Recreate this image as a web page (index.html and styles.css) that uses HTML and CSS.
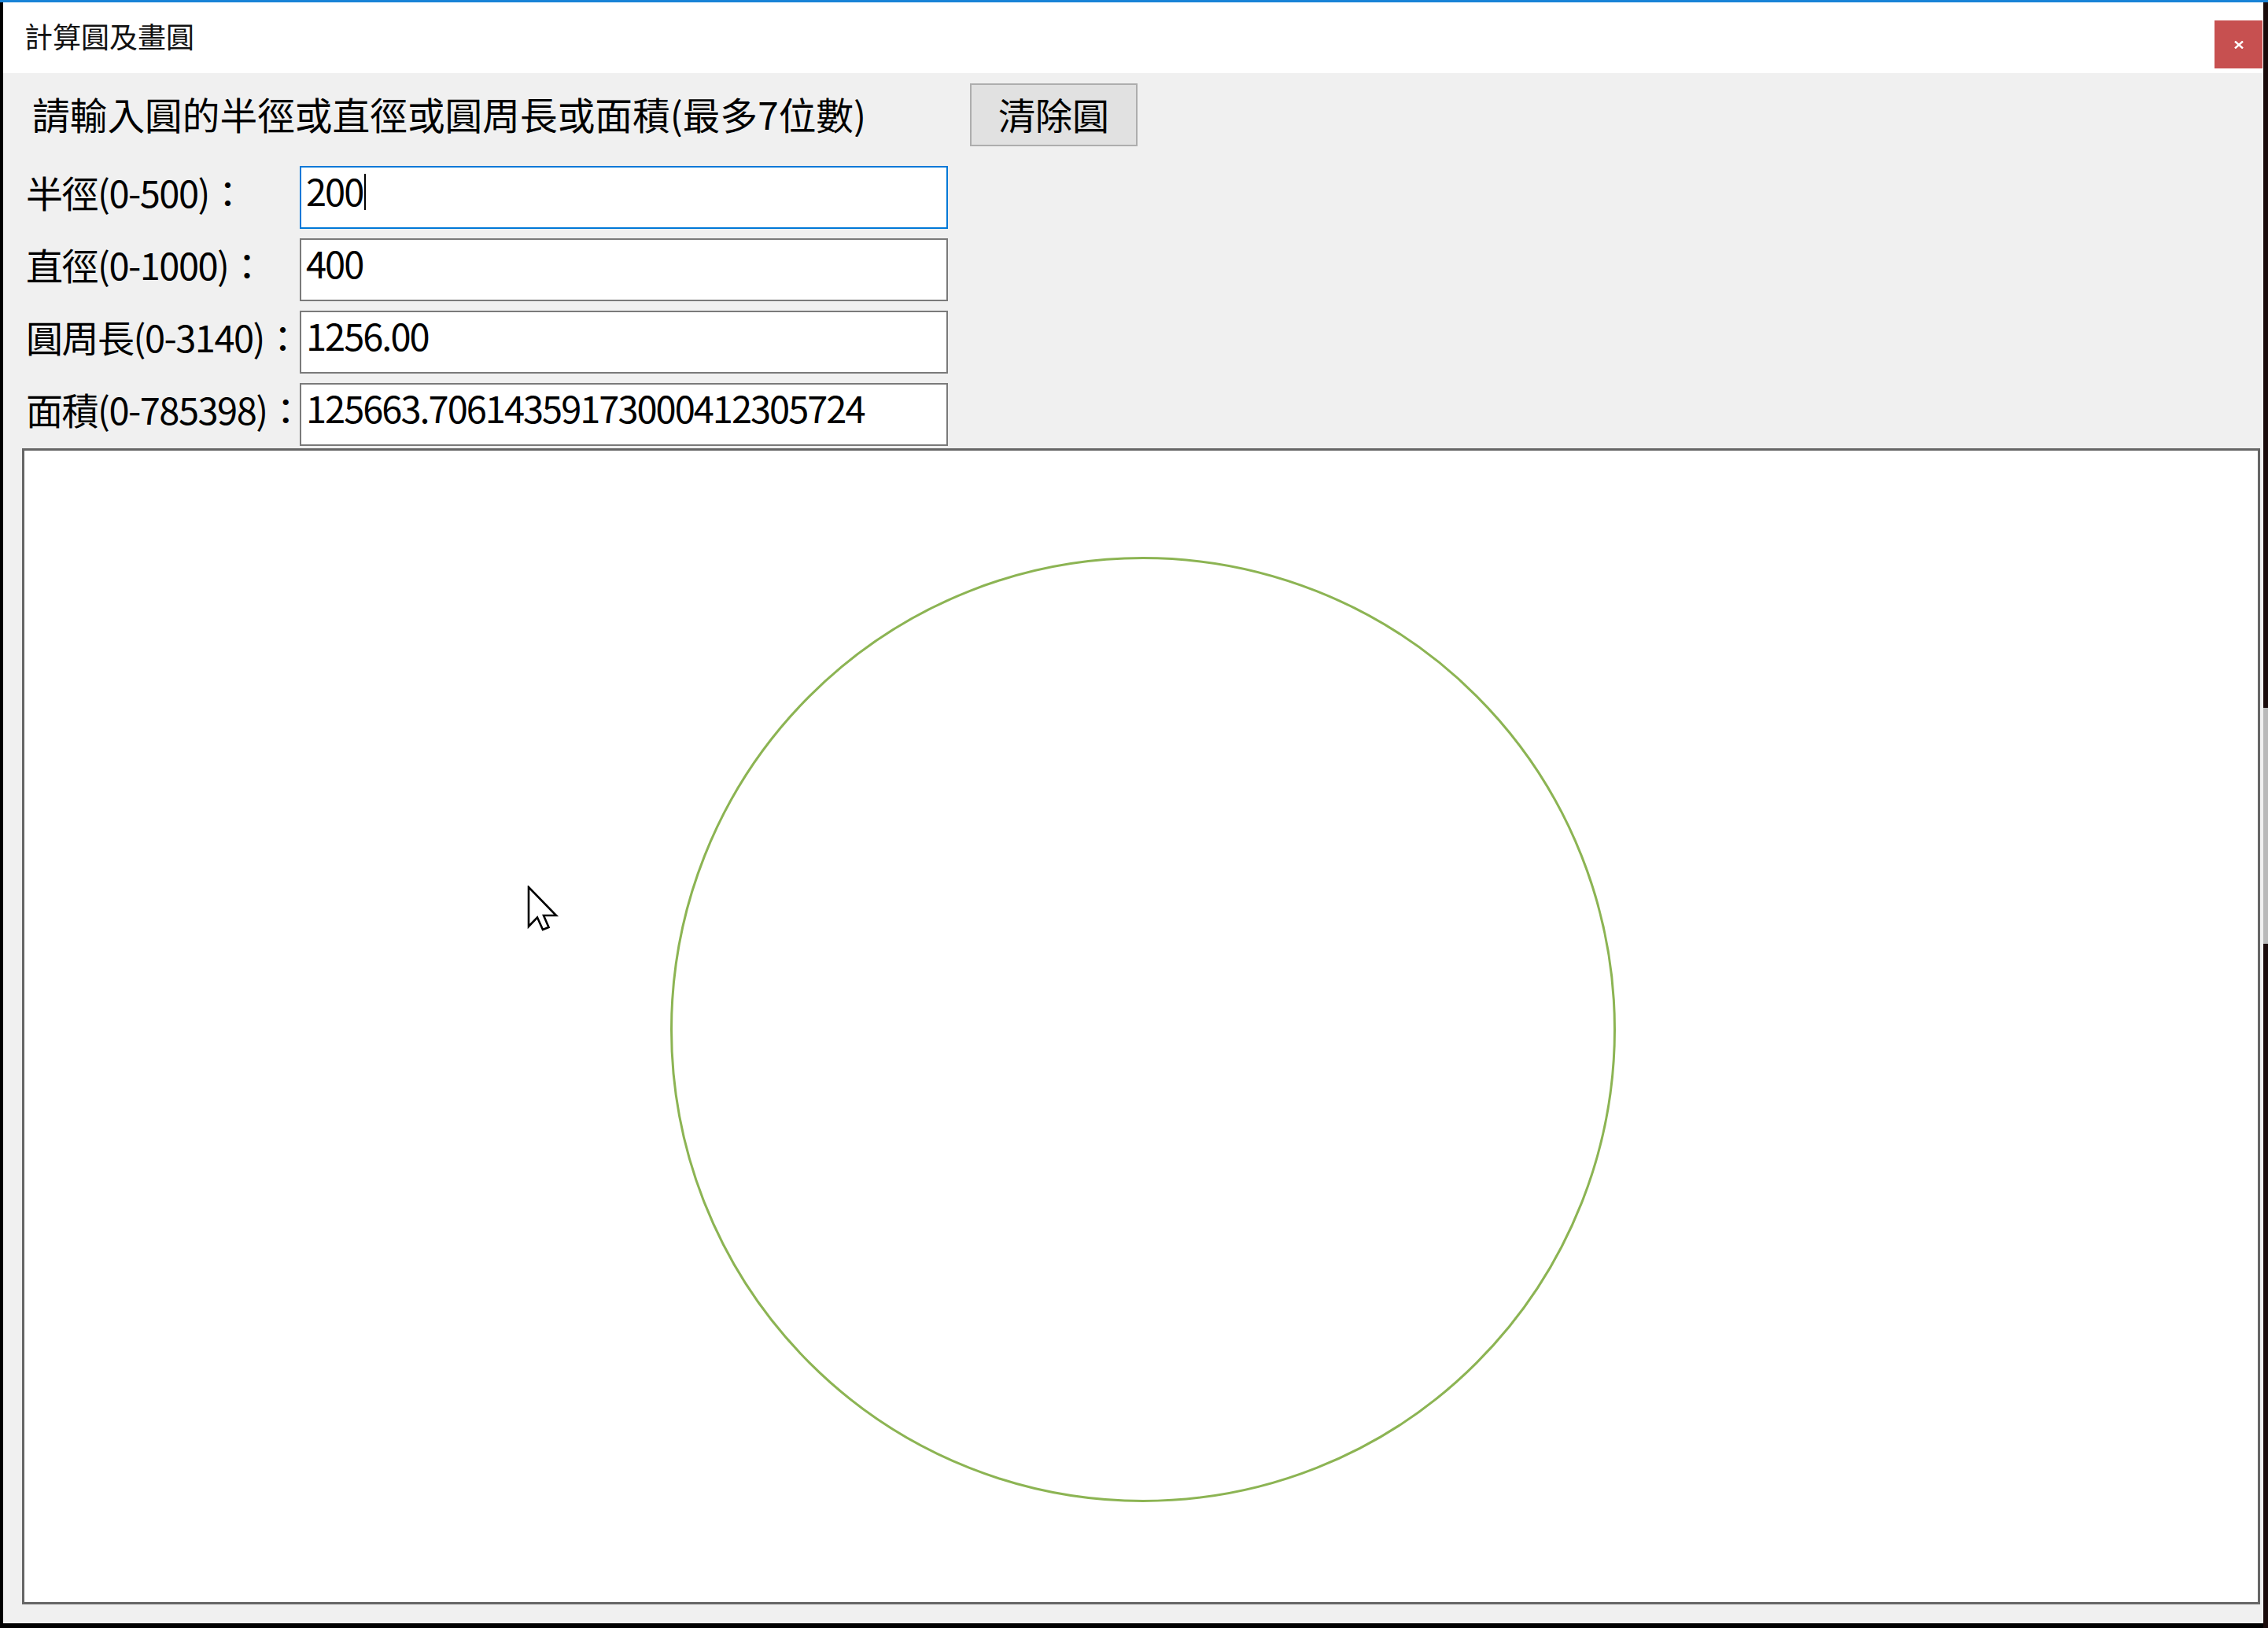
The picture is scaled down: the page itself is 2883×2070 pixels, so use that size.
FILE: index.html
```html
<!DOCTYPE html>
<html lang="zh-Hant">
<head>
<meta charset="utf-8">
<title>計算圓及畫圓</title>
<link rel="stylesheet" href="styles.css">
</head>
<body>
<div class="screen">
  <div class="gutter-left"></div>
  <div class="window">
    <div class="titlebar">
      <div class="title">計算圓及畫圓</div>
      <div class="close">
        <svg class="close-x" viewBox="0 0 12 10" width="12" height="10"><path d="M1 0.5 L11 9.5 M11 0.5 L1 9.5" stroke="#fff" stroke-width="2.4"/></svg>
      </div>
    </div>
    <div class="client">
      <div class="prompt-row">
        <div class="prompt">請輸入圓的半徑或直徑或圓周長或面積(最多7位數)</div>
        <div class="button">清除圓</div>
      </div>
      <div class="fields">
        <div class="label">半徑(0-500)：</div>
        <div class="textbox focused"><span class="value">200</span><span class="caret"></span></div>
        <div class="label">直徑(0-1000)：</div>
        <div class="textbox"><span class="value">400</span></div>
        <div class="label">圓周長(0-3140)：</div>
        <div class="textbox"><span class="value">1256.00</span></div>
        <div class="label">面積(0-785398)：</div>
        <div class="textbox"><span class="value">125663.70614359173000412305724</span></div>
      </div>
      <div class="canvas">
        <svg class="drawing" viewBox="0 0 2839 1464" width="2839" height="1464">
          <circle cx="1422" cy="736" r="599.5" fill="none" stroke="#8cb453" stroke-width="3"/>
        </svg>
        <svg class="cursor" viewBox="-2 -2 42 60" width="42" height="60">
          <path d="M0 0 L0 50 L11 38.5 L18 54 L25.5 51 L19 36 L35 36 Z" fill="#fff" stroke="#000" stroke-width="2.6" stroke-linejoin="miter"/>
        </svg>
      </div>
    </div>
  </div>
  <div class="gutter-right"><div class="desk-grey"></div></div>
</div>
</body>
</html>
```

FILE: styles.css
```css
html, body {
  margin: 0;
  padding: 0;
  background: #000;
}
body {
  width: 2883px;
  height: 2070px;
  overflow: hidden;
  font-family: "Noto Sans CJK TC", "Noto Sans", sans-serif;
  color: #000;
}
.screen {
  display: flex;
  width: 2883px;
  height: 2070px;
}
.gutter-left {
  width: 4px;
  flex: none;
  background: linear-gradient(#1883d7 0 3px, #000 3px);
}
.gutter-right {
  width: 6px;
  flex: none;
  background: linear-gradient(#1883d7 0 3px, #1a0b0b 3px);
  display: flex;
  flex-direction: column;
}
.desk-grey {
  margin-top: 900px;
  height: 300px;
  background: #b9b9b9;
}
.window {
  width: 2873px;
  height: 2064px;
  flex: none;
  display: flex;
  flex-direction: column;
  border-top: 3px solid #1883d7;
  box-sizing: border-box;
  background: #f0f0f0;
}
.titlebar {
  height: 90px;
  flex: none;
  background: #fff;
  display: flex;
  align-items: flex-start;
  justify-content: space-between;
}
.title {
  margin-top: 19px;
  padding-left: 27px;
  font-size: 36px;
  line-height: 46px;
  color: #111;
}
.close {
  margin-top: 23px;
  margin-right: 1px;
  width: 61px;
  height: 61px;
  background: #c75050;
  display: flex;
  align-items: center;
  justify-content: center;
}
.close-x {
  display: block;
}
.client {
  flex: 1;
  display: flex;
  flex-direction: column;
  background: #f0f0f0;
}
.prompt-row {
  display: flex;
  align-items: center;
  padding-top: 13px;
  height: 80px;
}
.prompt {
  width: 1229px;
  padding-left: 37px;
  box-sizing: border-box;
  font-size: 47.7px;
  line-height: 60px;
  white-space: nowrap;
  margin-top: -2px;
}
.button {
  width: 213px;
  height: 80px;
  box-sizing: border-box;
  border: 2px solid #adadad;
  background: #e1e1e1;
  font-size: 47px;
  line-height: 74px;
  text-align: center;
}
.fields {
  display: grid;
  grid-template-columns: 348px 824px;
  grid-auto-rows: 80px;
  row-gap: 12px;
  margin-top: 25px;
  padding-left: 29px;
  align-items: center;
}
.label {
  font-size: 47px;
  line-height: 60px;
  letter-spacing: -1.5px;
  white-space: nowrap;
  margin-top: -14px;
}
.textbox {
  height: 80px;
  box-sizing: border-box;
  border: 2px solid #7a7a7a;
  background: #fff;
  display: flex;
  align-items: flex-start;
  padding: 0 0 0 6px;
  font-size: 47px;
  line-height: 58px;
  white-space: nowrap;
}
.textbox.focused {
  border-color: #0078d7;
}
.value {
  letter-spacing: -2px;
}
.caret {
  width: 2px;
  height: 46px;
  margin-top: 8px;
  margin-left: 2px;
  background: #000;
}
.canvas {
  position: relative;
  margin: 3px 4px 0 24px;
  height: 1470px;
  box-sizing: border-box;
  border: 3px solid #666;
  background: #fff;
}
.drawing {
  display: block;
}
.cursor {
  position: absolute;
  left: 639px;
  top: 553px;
}
```
